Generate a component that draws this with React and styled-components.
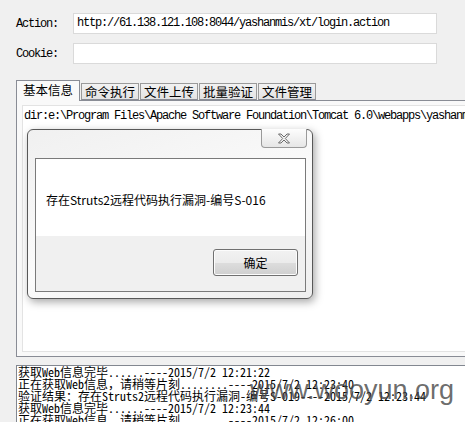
import React from "react";
import styled, { createGlobalStyle } from "styled-components";

const tabs = ["基本信息", "命令执行", "文件上传", "批量验证", "文件管理"];

const logLines = [
  "获取Web信息完毕......----2015/7/2 12:21:22",
  "正在获取Web信息，请稍等片刻........----2015/7/2 12:23:40",
  "验证结果：存在Struts2远程代码执行漏洞-编号S-019----2015/7/2 12:23:44",
  "获取Web信息完毕......----2015/7/2 12:23:44",
  "正在获取Web信息，请稍等片刻........----2015/7/2 12:26:00",
];

function App() {
  return (
    <>
      <GlobalStyle />
      <Page>
        <FormRow>
          <Label>Action:</Label>
          <Field>http://61.138.121.108:8044/yashanmis/xt/login.action</Field>
        </FormRow>
        <FormRow>
          <Label>Cookie:</Label>
          <Field />
        </FormRow>

        <TabBar>
          {tabs.map((t, i) => (
            <Tab key={t} $active={i === 0}>
              {t}
            </Tab>
          ))}
        </TabBar>
        <TabPanel>
          <TextArea>
            dir:e:\Program Files\Apache Software Foundation\Tomcat 6.0\webapps\yashanmis\
          </TextArea>
        </TabPanel>

        <LogBox>
          {logLines.map((l, i) => (
            <LogLine key={i}>{l}</LogLine>
          ))}
        </LogBox>

        <Dialog>
          <CloseButton>
            <svg width="14" height="11" viewBox="0 0 14 11">
              <path
                d="M1.5 1 L4 1 L7 4 L10 1 L12.5 1 L8.3 5.5 L12.5 10 L10 10 L7 7 L4 10 L1.5 10 L5.7 5.5 Z"
                fill="#f4f4f4"
                stroke="#6b6b6b"
                strokeWidth="1"
                strokeLinejoin="round"
              />
            </svg>
          </CloseButton>
          <DialogBody>
            <Message>存在Struts2远程代码执行漏洞-编号S-016</Message>
            <ButtonBar>
              <OkButton>确定</OkButton>
            </ButtonBar>
          </DialogBody>
        </Dialog>

        <Watermark>www.wooyun.org</Watermark>
      </Page>
    </>
  );
}

export default App;

const GlobalStyle = createGlobalStyle`
  html, body {
    margin: 0;
    padding: 0;
    background: #f0f0f0;
    width: 465px;
    height: 422px;
    overflow: hidden;
  }
`;

const Page = styled.div`
  position: relative;
  width: 465px;
  height: 422px;
  padding: 13px 0 0 16px;
  box-sizing: border-box;
  background: #f0f0f0;
  font-family: "Liberation Mono", "Noto Sans CJK SC", monospace;
  font-size: 12px;
  color: #000;
  overflow: hidden;
`;

const FormRow = styled.div`
  display: flex;
  align-items: center;
  height: 21px;
  margin-bottom: 9px;
`;

const Label = styled.div`
  width: 57px;
  letter-spacing: -1.2px;
`;

const Field = styled.div`
  width: 364px;
  height: 21px;
  box-sizing: border-box;
  border: 1px solid #dadada;
  background: #fff;
  padding: 0 0 0 3px;
  line-height: 19px;
  letter-spacing: -1.2px;
  white-space: nowrap;
  overflow: hidden;
`;

const TabBar = styled.div`
  display: flex;
  align-items: flex-end;
  height: 20px;
  margin-top: 16px;
  position: relative;
  z-index: 1;
`;

const Tab = styled.div`
  box-sizing: border-box;
  height: ${(p) => (p.$active ? "21px" : "17px")};
  margin-bottom: ${(p) => (p.$active ? "-1px" : "0")};
  width: ${(p) => (p.$active ? "64px" : "58px")};
  margin-right: 1px;
  padding: ${(p) => (p.$active ? "1px 0 0 0" : "0")};
  border: 1px solid ${(p) => (p.$active ? "#898c95" : "#9a9a9a")};
  border-bottom: ${(p) => (p.$active ? "none" : "1px solid #898c95")};
  background: ${(p) =>
    p.$active ? "#f9f9f9" : "linear-gradient(#f2f2f2, #e3e3e3)"};
  font-family: "Noto Sans CJK SC", sans-serif;
  font-size: 12.5px;
  line-height: 15px;
  text-align: center;
  color: #000;
`;

const TabPanel = styled.div`
  width: 480px;
  height: 257px;
  box-sizing: border-box;
  border-top: 1px solid #898c95;
  border-left: 1px solid #898c95;
  border-bottom: 1px solid #898c95;
  background: #f9f9f9;
  padding: 4px 0 4px 5px;
`;

const TextArea = styled.div`
  height: 100%;
  box-sizing: border-box;
  border: 1px solid #e3e3e3;
  background: #fff;
  padding: 3px 0 0 1px;
  line-height: 14px;
  letter-spacing: -1.2px;
  white-space: nowrap;
  overflow: hidden;
`;

const LogBox = styled.div`
  margin-top: 8px;
  height: 60px;
  box-sizing: border-box;
  border-top: 1px solid #828790;
  border-left: 1px solid #828790;
  background: #fff;
  padding: 0 0 0 1px;
  overflow: hidden;
`;

const LogLine = styled.div`
  font-family: "Noto Sans Mono CJK SC", "Liberation Mono", monospace;
  font-size: 12px;
  line-height: 12px;
  white-space: nowrap;
`;

const Dialog = styled.div`
  position: absolute;
  left: 27px;
  top: 129px;
  width: 286px;
  height: 170px;
  box-sizing: border-box;
  border: 1px solid #585858;
  border-radius: 6px;
  background: linear-gradient(160deg, #f0f0f0 0%, #fbfbfb 55%, #eeeeee 100%);
  box-shadow: 2px 3px 8px rgba(0, 0, 0, 0.35);
  padding: 28px 6px 6px 7px;
  z-index: 5;
`;

const CloseButton = styled.div`
  position: absolute;
  top: -1px;
  right: 5px;
  width: 46px;
  height: 19px;
  box-sizing: border-box;
  border: 1px solid #9a9a9a;
  border-top: none;
  border-radius: 0 0 4px 4px;
  background: linear-gradient(#fdfdfd, #e6e6e6);
  display: flex;
  align-items: center;
  justify-content: center;
`;

const DialogBody = styled.div`
  height: 100%;
  box-sizing: border-box;
  border: 1px solid #7a7a7a;
  display: flex;
  flex-direction: column;
`;

const Message = styled.div`
  height: 77px;
  background: #fff;
  display: flex;
  align-items: center;
  padding: 3px 0 0 10px;
  box-sizing: border-box;
  font-family: "Noto Sans CJK SC", sans-serif;
  font-size: 12px;
`;

const ButtonBar = styled.div`
  flex: 1;
  background: #f0f0f0;
  display: flex;
  justify-content: flex-end;
  align-items: flex-start;
  padding: 13px 7px 0 0;
`;

const OkButton = styled.div`
  width: 85px;
  height: 27px;
  box-sizing: border-box;
  border: 1px solid #707070;
  border-radius: 3px;
  box-shadow: inset 0 0 0 1px #fcfcfc;
  background: linear-gradient(#f2f2f2 0%, #ebebeb 50%, #dddddd 51%, #cfcfcf 100%);
  font-family: "Noto Sans CJK SC", sans-serif;
  font-size: 12px;
  line-height: 25px;
  text-align: center;
`;

const Watermark = styled.div`
  position: absolute;
  left: 250px;
  top: 377px;
  font-family: "Liberation Sans", Arial, sans-serif;
  font-size: 27px;
  line-height: 27px;
  color: rgba(70, 70, 70, 0.8);
  white-space: nowrap;
  z-index: 6;
`;
